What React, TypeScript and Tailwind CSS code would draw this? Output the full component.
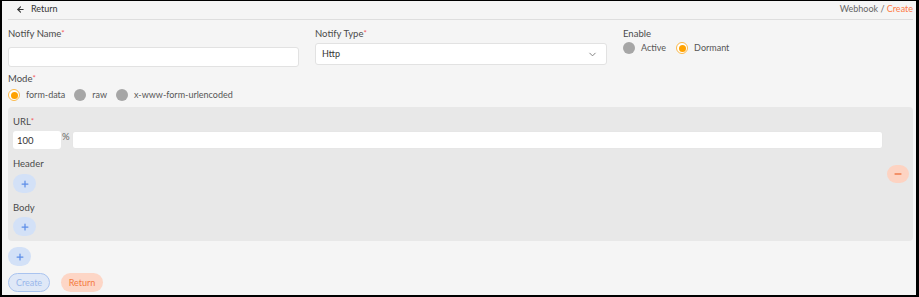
import React, { useState } from 'react';
import { ArrowLeft, ChevronDown, Plus, Minus } from 'lucide-react';
import clsx from 'clsx';

function Radio({ label, checked, onClick }: { label: string; checked?: boolean; onClick?: () => void }) {
  return (
    <button onClick={onClick} className="flex items-center gap-[6px] text-[9px] text-[#555]">
      {checked ? (
        <span className="w-[12px] h-[12px] rounded-full border border-[#fbb94a] bg-white flex items-center justify-center">
          <span className="w-[7px] h-[7px] rounded-full bg-[#ffa200]" />
        </span>
      ) : (
        <span className="w-[12px] h-[12px] rounded-full bg-[#a6a6a6]" />
      )}
      <span>{label}</span>
    </button>
  );
}

function Label({ text, required, className }: { text: string; required?: boolean; className?: string }) {
  return (
    <div className={clsx('flex items-center text-[9.5px] text-[#4a4a4a]', className)}>
      {text}
      {required && <span className="text-[#f45b5b] -mt-[3px] text-[8px]">*</span>}
    </div>
  );
}

function AddButton() {
  return (
    <button className="w-[23px] h-[19px] rounded-full bg-[#d3e1f7] flex items-center justify-center">
      <Plus className="w-[10px] h-[10px] text-[#5d8ee8]" strokeWidth={3} />
    </button>
  );
}

export default function App() {
  const [mode, setMode] = useState('form-data');
  const [enable, setEnable] = useState('dormant');

  return (
    <div className="w-[919px] h-[297px] bg-black pt-[1px] pl-[2px] pr-[3px] pb-[2px]" style={{ fontFamily: 'Lato, "Open Sans", sans-serif' }}>
      <div className="w-full h-full bg-[#f5f5f5] pl-[6px] pr-[3px]">
        <div className="h-[19px] flex items-center justify-between border-b border-[#dedede] pb-[2px]">
          <button className="flex items-center gap-[6px] pl-[8px] text-[9px] text-[#333]">
            <ArrowLeft className="w-[9px] h-[9px]" strokeWidth={3} />
            <span>Return</span>
          </button>
          <div className="text-[9px] text-[#666]">
            Webhook / <span className="text-[#ff7a45]">Create</span>
          </div>
        </div>

        <div className="h-[47px] grid grid-cols-[291px_292px_auto] gap-x-[16px]">
          <div>
            <Label text="Notify Name" required className="h-[23px] pt-[5px]" />
            <input className="w-full h-[20px] bg-white border border-[#e2e2e2] rounded-[3px] outline-none px-2 text-[10px]" />
          </div>
          <div>
            <Label text="Notify Type" required className="h-[23px] pt-[5px]" />
            <div className="w-full h-[22px] bg-white border border-[#e2e2e2] rounded-[3px] flex items-center justify-between px-[6px] text-[9px] text-[#333]">
              <span>Http</span>
              <ChevronDown className="w-[11px] h-[11px] text-[#777] mr-[2px]" />
            </div>
          </div>
          <div>
            <Label text="Enable" className="h-[23px] pt-[5px]" />
            <div className="h-[10px] flex items-center gap-[10px] mt-[0px]">
              <Radio label="Active" checked={enable === 'active'} onClick={() => setEnable('active')} />
              <Radio label="Dormant" checked={enable === 'dormant'} onClick={() => setEnable('dormant')} />
            </div>
          </div>
        </div>

        <Label text="Mode" required className="h-[21px] pt-[4px]" />
        <div className="h-[14px] flex items-center gap-[9px]">
          <Radio label="form-data" checked={mode === 'form-data'} onClick={() => setMode('form-data')} />
          <Radio label="raw" checked={mode === 'raw'} onClick={() => setMode('raw')} />
          <Radio label="x-www-form-urlencoded" checked={mode === 'urlencoded'} onClick={() => setMode('urlencoded')} />
        </div>

        <div className="mt-[5px] h-[134px] bg-[#e8e8e8] rounded-[4px] flex items-center pl-[5px] pr-[4px]">
          <div className="flex-1 h-full pt-[7px] pr-[4px]">
            <Label text="URL" required className="h-[16px]" />
            <div className="mt-[1px] flex items-start">
              <input defaultValue="100" className="w-[48px] h-[18px] bg-white rounded-[3px] outline-none px-[4px] text-[9.5px] text-[#333]" />
              <span className="w-[11px] pl-[1px] text-[9.5px] text-[#666] leading-[12px]">%</span>
              <input className="flex-1 h-[18px] bg-white border border-[#e6e6e6] rounded-[3px] outline-none px-2 text-[10px]" />
            </div>
            <Label text="Header" className="h-[16px] mt-[7px]" />
            <div className="mt-[2px]">
              <AddButton />
            </div>
            <Label text="Body" className="h-[16px] mt-[7px]" />
            <div className="mt-[1px]">
              <AddButton />
            </div>
          </div>
          <button className="w-[22px] h-[18px] rounded-full bg-[#fdd3c2] flex items-center justify-center">
            <Minus className="w-[10px] h-[10px] text-[#ef7c4c]" strokeWidth={3.5} />
          </button>
        </div>

        <div className="mt-[6px]">
          <AddButton />
        </div>

        <div className="mt-[7px] flex gap-[11px]">
          <button className="w-[42px] h-[19px] rounded-full border border-[#a9c3ef] bg-[#dfe8f7] text-[9px] text-[#9ab7eb]">
            Create
          </button>
          <button className="w-[42px] h-[19px] rounded-full bg-[#fdd6c6] text-[9px] text-[#f47a40]">
            Return
          </button>
        </div>
      </div>
    </div>
  );
}
